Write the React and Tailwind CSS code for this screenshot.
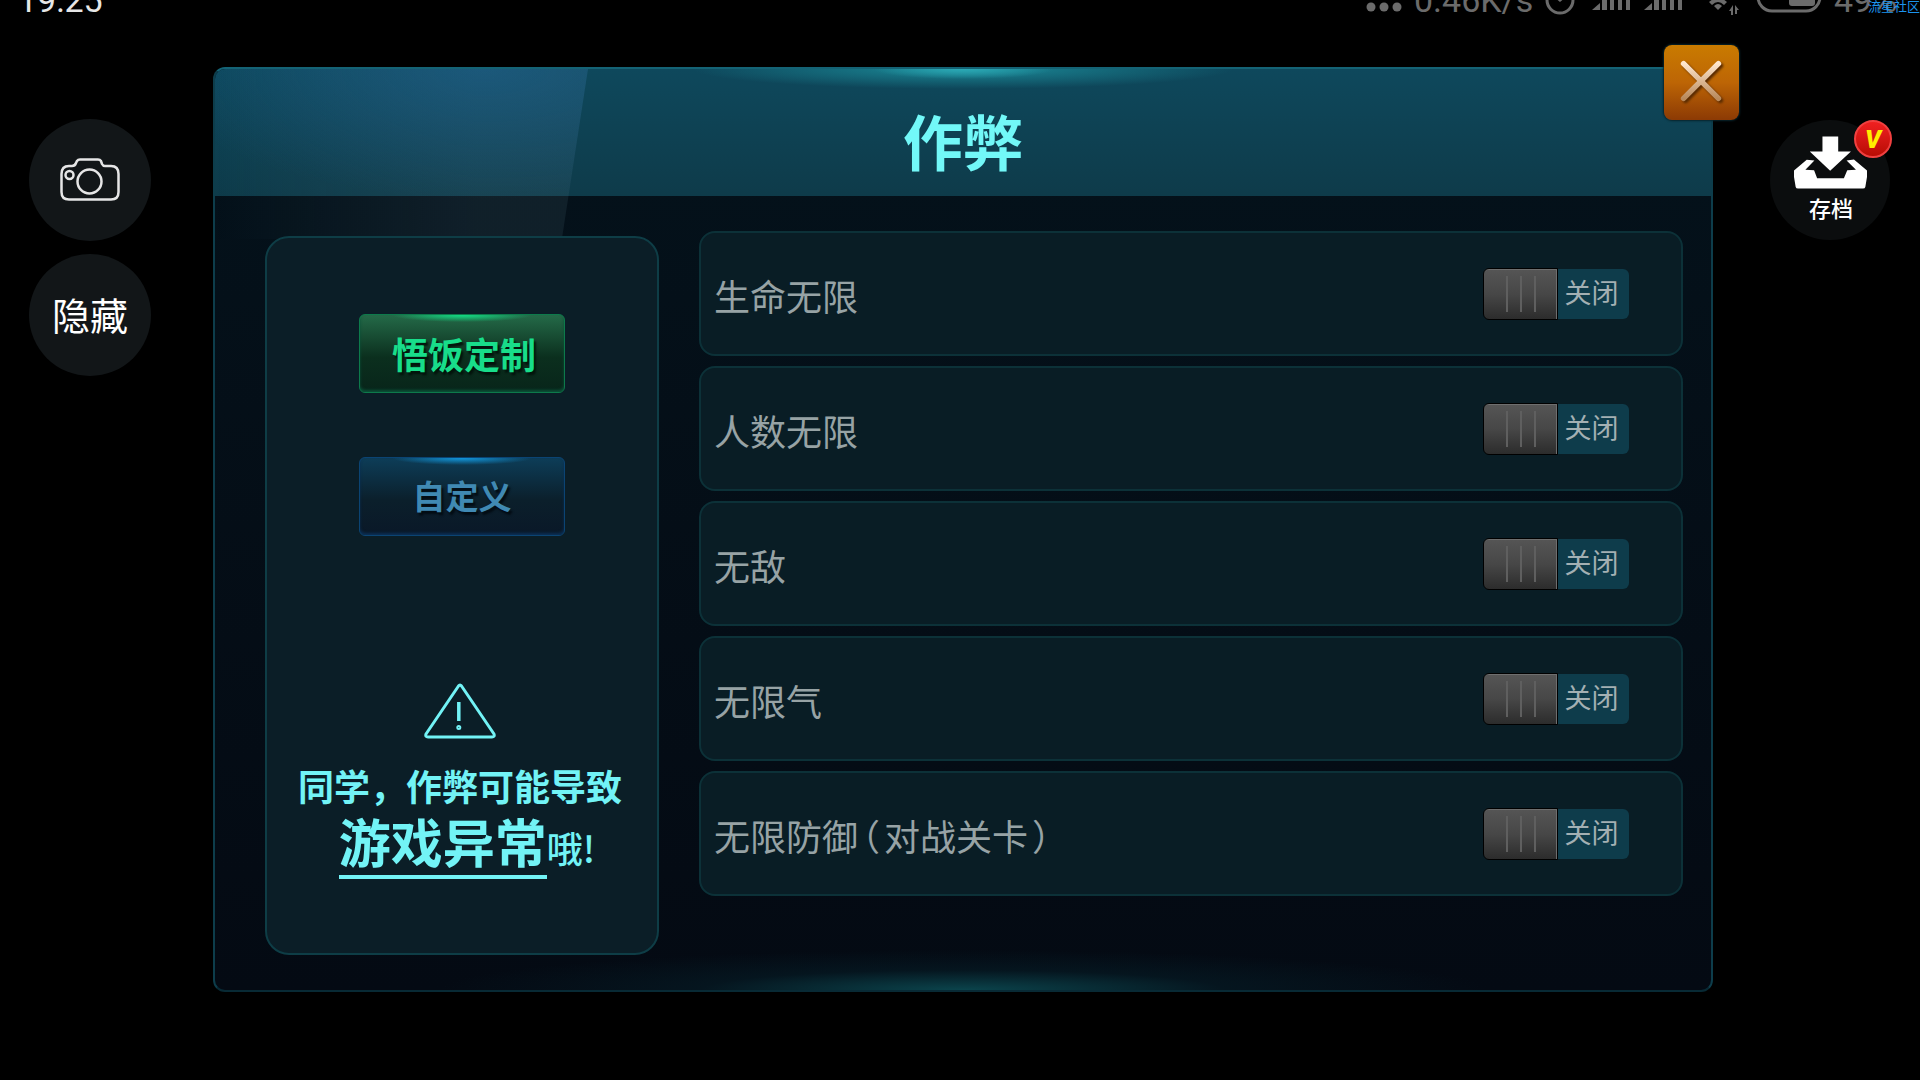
import React, { useState } from "react";

const CHEATS = [
  { name: "生命无限" },
  { name: "人数无限" },
  { name: "无敌" },
  { name: "无限气" },
  { name: "无限防御", note: "对战关卡" },
];

function SignalIcon() {
  return (
    <svg className="h-3 w-10 shrink-0" viewBox="0 0 40 12" fill="#6b6b6b" aria-hidden="true">
      <path d="M0 10 L8 3 V10 Z" />
      <rect x="10" y="0" width="5" height="10" />
      <rect x="18" y="0" width="4" height="10" />
      <rect x="26" y="0" width="4" height="10" />
      <rect x="34" y="0" width="4" height="10" />
    </svg>
  );
}

function StatusBar() {
  return (
    <header className="flex h-4 shrink-0 items-start justify-between overflow-hidden pl-[18px] font-['Roboto',sans-serif] text-[34px] leading-8">
      <time className="-mt-4 text-[#e6e6e6]">19:25</time>
      <div className="relative flex items-start text-[#6b6b6b]">
        <svg className="mr-3 h-4 w-9" viewBox="0 0 36 16" fill="#6b6b6b" aria-hidden="true">
          <circle cx="5" cy="7" r="4.5" />
          <circle cx="18" cy="7" r="4.5" />
          <circle cx="31" cy="7" r="4.5" />
        </svg>
        <span className="-mt-4 mr-3 w-[118px] whitespace-nowrap">0.46K/s</span>
        <svg className="mr-4 h-4 w-8" viewBox="0 0 32 16" fill="none" stroke="#6b6b6b" strokeWidth="3" aria-hidden="true">
          <circle cx="16" cy="0" r="13" />
          <path d="M11 -4 L16 0 L21 -4" />
        </svg>
        <span className="mr-3"><SignalIcon /></span>
        <SignalIcon />
        <svg className="ml-6 mr-4 h-4 w-8" viewBox="0 0 32 16" fill="#6b6b6b" aria-hidden="true">
          <path d="M1 2 Q10 -6 19 2 L16 5 Q10 -1 4 5 Z M6 6 Q10 2 14 6 L10 10 Z" />
          <path d="M25 5 V15 H23 V11 H21 Z M27 5 L31 10 H29 V14 H27 Z" />
        </svg>
        <svg className="mr-3 h-4 w-[66px]" viewBox="0 0 66 16" aria-hidden="true">
          <rect x="2" y="-22" width="62" height="33" rx="14" fill="none" stroke="#6b6b6b" strokeWidth="3" />
          <rect x="33" y="-10" width="26" height="16" rx="3" fill="#6b6b6b" />
        </svg>
        <span className="-mt-4 w-[86px] whitespace-nowrap">49%</span>
        <span className="absolute right-0 top-0 font-['Noto_Sans_CJK_SC',sans-serif] text-[13px] leading-3 text-[#1c94ee]">
          流星社区
        </span>
      </div>
    </header>
  );
}

function CheatRow({ name, note }) {
  const [on, setOn] = useState(false);
  return (
    <li className="flex h-[125px] items-center justify-between rounded-2xl border-2 border-[#0c3138] bg-[#091d25] pr-[52px] pl-[13px]">
      <span className="pt-0.5 text-4xl text-[#97a3a5]">
        {name}
        {note && (
          <>
            <span className="mx-1 [font-feature-settings:'halt']">（</span>
            {note}
            <span className="mx-1 [font-feature-settings:'halt']">）</span>
          </>
        )}
      </span>
      <button
        type="button"
        role="switch"
        aria-checked={on}
        aria-label={name}
        onClick={() => setOn(!on)}
        className={"flex h-[50px] w-[146px] items-center rounded-md bg-[#0e3c4b] " + (on ? "flex-row-reverse" : "")}
      >
        <span className="flex h-[52px] w-[75px] shrink-0 items-center justify-center gap-3 rounded-l-md border border-black bg-linear-to-b from-[#555555] via-[#474747] to-[#2c2c2c] shadow-[inset_-1px_1px_0_#6e6e6e]">
          <i className="h-9 w-0.5 bg-[#5f5f5f]" />
          <i className="h-9 w-0.5 bg-[#5f5f5f]" />
          <i className="h-9 w-0.5 bg-[#5f5f5f]" />
        </span>
        <span className="flex-1 pr-1 pb-1 text-center text-[27px] leading-8 text-[#a3b0b3]">{on ? "开启" : "关闭"}</span>
      </button>
    </li>
  );
}

function SidePanel() {
  return (
    <section className="flex h-[719px] w-[394px] shrink-0 flex-col items-center rounded-3xl border-2 border-[#0e3d46] bg-[#0b1e27] pt-[76px]">
      <button
        type="button"
        className="h-[79px] w-[206px] rounded-md border border-[#0d7a4b] bg-[radial-gradient(70px_7px_at_50%_0,#12e287,transparent),linear-gradient(#246a48,#0b2f1e_55%,#08251a)] pb-0.5 pl-1 text-4xl font-bold text-[#18dd8a] shadow-[inset_0_-2px_3px_#0b5239] [text-shadow:2px_3px_2px_#03140c]"
      >
        悟饭定制
      </button>
      <button
        type="button"
        className="mt-16 h-[79px] w-[206px] rounded-md border border-[#0b4473] bg-[radial-gradient(70px_7px_at_50%_0,#129be2,transparent),linear-gradient(#0d3d58,#0b1f2b_55%,#0a1828)] pb-0.5 text-[33px] font-bold text-[#4089b3] shadow-[inset_0_-2px_3px_#0b2f55] [text-shadow:2px_3px_2px_#030c14]"
      >
        自定义
      </button>
      <svg className="mt-[147px] mr-1 h-[56px] w-[72px]" viewBox="0 0 72 56" fill="none" stroke="#72f3f6" strokeWidth="3" strokeLinejoin="round" aria-hidden="true">
        <path d="M34.500 3 Q36 1 37.500 3 L70 51 Q71 54 68 54 H4 Q1 54 2 51 Z" />
        <path d="M34.800 19 V38" strokeWidth="3.500" />
        <circle cx="34.800" cy="44.500" r="1" strokeWidth="3" />
      </svg>
      <p className="mt-[26px] mr-1 flex flex-col items-center text-4xl text-[#72f3f6]">
        <span className="leading-10 font-bold">同学，作弊可能导致</span>
        <span className="mt-2 flex items-baseline pl-3.5 leading-[56px]">
          <strong className="border-b-4 border-[#72f3f6] pb-1.5 text-[52px] font-bold">游戏异常</strong>
          <span className="font-medium">哦!</span>
        </span>
      </p>
    </section>
  );
}

export default function App() {
  return (
    <div className="flex min-h-screen flex-col overflow-hidden bg-black font-['Noto_Sans_CJK_SC',sans-serif]">
      <StatusBar />
      <div className="flex items-start">
        <nav className="mt-[103px] flex w-[213px] shrink-0 flex-col gap-[13px] pl-[29px]">
          <button type="button" aria-label="截图" className="flex size-[122px] items-center justify-center rounded-full bg-[#121618] pb-0.5">
            <svg className="h-[43px] w-[60px]" viewBox="0 0 60 43" fill="none" stroke="#e6e6e6" strokeWidth="2.500" aria-hidden="true">
              <path d="M9 8 H12 Q15 8 16 5 L17 3 Q18 1.500 20 1.500 H38 Q40 1.500 41 3 L42 6 Q43 8 45 8 H51 Q58.500 8 58.500 16 V34 Q58.500 41.500 51 41.500 H9 Q1.500 41.500 1.500 34 V16 Q1.500 8 9 8 Z" />
              <circle cx="29.500" cy="23.500" r="12" />
              <circle cx="9.500" cy="17" r="4" />
            </svg>
          </button>
          <button type="button" className="size-[122px] rounded-full bg-[#121618] pb-1 text-[38px] text-white">
            隐藏
          </button>
        </nav>

        <main className="relative mt-[51px] flex h-[925px] min-w-0 flex-1 flex-col rounded-xl border-2 border-[#0d3d4b] border-t-[#146375] border-b-[#082a35] bg-linear-to-b from-[#04121b] to-[#040a13]">
          <div className="pointer-events-none absolute inset-x-0 top-0 h-[127px] rounded-t-[10px] bg-[radial-gradient(90px_10px_at_50%_0,#2ba9b5,transparent),radial-gradient(270px_20px_at_50%_0,#1b8a98,transparent),linear-gradient(#0e485c,#0e3b4a)]" />
          <div className="pointer-events-none absolute top-0 left-0 h-[170px] w-[373px] rounded-tl-[10px] bg-[radial-gradient(330px_130px_at_72%_0,#2068a066,transparent),linear-gradient(to_right,transparent,#50708029_70%)] [clip-path:polygon(0_0,100%_0,93%_100%,0_100%)]" />
          <div className="pointer-events-none absolute inset-x-0 bottom-0 h-10 bg-[radial-gradient(35%_100%_at_50%_100%,#0b444c,#06202a80_50%,transparent)]" />

          <h1 className="relative flex h-[127px] shrink-0 items-center justify-center pt-3.5 text-[60px] leading-none font-bold text-[#72f8f8]">
            作弊
          </h1>

          <button
            type="button"
            aria-label="关闭"
            className="absolute -top-6 -right-7 flex size-[75px] items-center justify-center rounded-lg bg-linear-to-b from-[#c97b00] via-[#bd6505] to-[#8c3a04] pr-0.5 pb-1 shadow-[0_0_2px_1px_#07242c]"
          >
            <svg className="size-11 drop-shadow-[2px_2px_1px_#5a2b00]" viewBox="0 0 48 48" fill="none" stroke="url(#cross)" strokeWidth="6" strokeLinecap="round" aria-hidden="true">
              <defs>
                <linearGradient id="cross" x1="0" y1="0" x2="0" y2="1">
                  <stop offset="0" stopColor="#ffe6cc" />
                  <stop offset="1" stopColor="#b98a5c" />
                </linearGradient>
              </defs>
              <path d="M5 5 L43 43 M43 5 L5 43" />
            </svg>
          </button>

          <div className="relative flex items-start gap-10 pt-[35px] pr-[28px] pl-[50px]">
            <div className="pt-[5px]">
              <SidePanel />
            </div>
            <ul className="flex min-w-0 flex-1 flex-col gap-2.5">
              {CHEATS.map((cheat) => (
                <CheatRow key={cheat.name} name={cheat.name} note={cheat.note} />
              ))}
            </ul>
          </div>
        </main>

        <aside className="mt-[104px] w-[207px] shrink-0 pl-[57px]">
          <button type="button" className="relative flex size-[120px] flex-col items-center rounded-full bg-[#0b0d0e] pt-4 text-white">
            <svg className="h-[53px] w-[73px]" viewBox="462 348 218 158" fill="#ffffff" aria-hidden="true">
              <path d="M547 349 H594 V394 H632 L570 452 L509 394 H547 Z" />
              <path d="M500 419 L523 421 L496 449 L522 450 L531 474 H611 L621 450 L647 449 L619 421 L641 418 L680 451 V470 L675 500 Q674 505 668 505 H474 Q468 505 467 500 L462 470 V451 Z" />
            </svg>
            <span className="mt-0.5 pl-0.5 text-[22px] leading-8 font-medium">存档</span>
            <span className="absolute top-0 -right-0.5 flex size-[38px] items-center justify-center rounded-full border-2 border-[#f04040] bg-linear-to-b from-[#f02020] to-[#b80c04] font-['Roboto',sans-serif] text-[25px] leading-none font-black text-[#ffee00] italic">
              V
            </span>
          </button>
        </aside>
      </div>
    </div>
  );
}
